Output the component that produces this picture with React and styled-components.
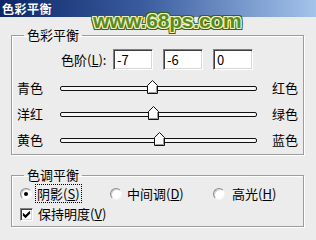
import styled, { createGlobalStyle } from "styled-components";

const GlobalStyle = createGlobalStyle`
  html, body {
    margin: 0;
    padding: 0;
    background: #ececec;
  }
  * {
    box-sizing: border-box;
  }
`;

const sliders = [
  { left: "青色", right: "红色", value: -7 },
  { left: "洋红", right: "绿色", value: -6 },
  { left: "黄色", right: "蓝色", value: 0 },
];

const TRACK_WIDTH = 197;

function Slider({ value }) {
  const x = ((value + 100) / 200) * TRACK_WIDTH - 5.5;
  return (
    <Track>
      <Thumb style={{ left: x }} width="11" height="14" viewBox="0 0 11 14">
        <polygon
          points="0.5,5.5 5.5,0.5 10.5,5.5 10.5,13.5 0.5,13.5"
          fill="#fbfbfb"
          stroke="#111"
        />
        <polyline points="9.5,6 9.5,12.5 1.5,12.5" fill="none" stroke="#9a9a9a" />
      </Thumb>
    </Track>
  );
}

function App() {
  return (
    <>
      <GlobalStyle />
      <Window>
        <TitleBar>色彩平衡</TitleBar>
        <Watermark>www.68ps.com</Watermark>
        <Content>
          <Group $height={127}>
            <Legend>色彩平衡</Legend>
            <LevelRow>
              <LevelLabel>
                色阶(<u>L</u>):
              </LevelLabel>
              <Field>-7</Field>
              <Field>-6</Field>
              <Field>0</Field>
            </LevelRow>
            <SliderList>
              {sliders.map((s) => (
                <SliderRow key={s.left}>
                  <span>{s.left}</span>
                  <Slider value={s.value} />
                  <RightLabel>{s.right}</RightLabel>
                </SliderRow>
              ))}
            </SliderList>
          </Group>

          <Group $height={59} $gap={13}>
            <Legend>色调平衡</Legend>
            <RadioRow>
              <Option $width={90}>
                <Radio $checked />
                <Focus>
                  阴影(<u>S</u>)
                </Focus>
              </Option>
              <Option $width={103}>
                <Radio />
                <span>
                  中间调(<u>D</u>)
                </span>
              </Option>
              <Option $gap={7}>
                <Radio />
                <span>
                  高光(<u>H</u>)
                </span>
              </Option>
            </RadioRow>
            <CheckRow>
              <CheckBox>
                <svg width="9" height="9" viewBox="0 0 9 9">
                  <path d="M1 3.5 L3.5 6 L8 1.5 M1 4.8 L3.5 7.3 L8 2.8" fill="none" stroke="#000" strokeWidth="1.2" />
                </svg>
              </CheckBox>
              <span>
                保持明度(<u>V</u>)
              </span>
            </CheckRow>
          </Group>
        </Content>
      </Window>
    </>
  );
}

const Window = styled.div`
  position: relative;
  width: 316px;
  height: 240px;
  overflow: hidden;
  background: #ececec;
  font-family: "Noto Sans CJK SC", "Liberation Sans", sans-serif;
  font-size: 13px;
  color: #000;
`;

const TitleBar = styled.div`
  height: 17px;
  padding-left: 2px;
  display: flex;
  align-items: center;
  background: linear-gradient(to right, #0c2668 0%, #3a5c9e 45%, #a4c4ec 100%);
  color: #fff;
  font-weight: bold;
  font-size: 12px;
  letter-spacing: 0.5px;
  line-height: 17px;
`;

const Watermark = styled.div`
  position: absolute;
  left: 93px;
  top: 10px;
  font-family: "Liberation Sans", Arial, sans-serif;
  font-weight: bold;
  font-size: 21px;
  line-height: 21px;
  color: #5d8a1f;
  letter-spacing: -0.2px;
  text-shadow:
    1px 0 0 #eef3c4, -1px 0 0 #eef3c4, 0 1px 0 #eef3c4, 0 -1px 0 #eef3c4,
    1px 1px 0 #eef3c4, -1px -1px 0 #eef3c4, 1px -1px 0 #eef3c4, -1px 1px 0 #eef3c4,
    2px 0 0 #3f5e14, -2px 0 0 #3f5e14, 0 2px 0 #3f5e14, 0 -2px 0 #3f5e14,
    2px 2px 0 #3f5e14, -2px -2px 0 #3f5e14, 2px -2px 0 #3f5e14, -2px 2px 0 #3f5e14;
`;

const Content = styled.div`
  padding: 0 12px 0 11px;
  display: flex;
  flex-direction: column;
`;

const Group = styled.fieldset`
  margin: ${(p) => p.$gap ?? 11}px 0 0;
  padding: 0;
  height: ${(p) => p.$height}px;
  border: 1px solid #9c9c9c;
  box-shadow: 1px 1px 0 #fff, inset 1px 1px 0 #fff;
  min-width: 0;
`;

const Legend = styled.legend`
  margin-left: 12px;
  padding: 0 3px;
  line-height: 14px;
  font-size: 13px;
`;

const LevelRow = styled.div`
  display: flex;
  align-items: center;
  padding: 7px 0 0 49px;
  gap: 10px;
  line-height: 16px;
`;

const LevelLabel = styled.span`
  width: 44px;
  margin-right: -2px;
  white-space: nowrap;
`;

const Field = styled.div`
  width: 40px;
  height: 21px;
  padding: 1px 0 0 3px;
  background: #fff;
  border: 1px solid;
  border-color: #808080 #fff #fff #808080;
  box-shadow: inset 1px 1px 0 #404040, inset -1px -1px 0 #d8d8d8;
  line-height: 17px;
`;

const SliderList = styled.div`
  margin-top: 5px;
  display: flex;
  flex-direction: column;
`;

const SliderRow = styled.div`
  display: grid;
  grid-template-columns: 43px ${TRACK_WIDTH}px auto;
  align-items: center;
  height: 26px;
  padding-left: 5px;
  line-height: 16px;
`;

const Track = styled.div`
  position: relative;
  height: 5px;
  border: 1px solid #111;
  border-radius: 2px;
  background: #f6f6f6;
`;

const Thumb = styled.svg`
  position: absolute;
  top: -7px;
  display: block;
`;

const RightLabel = styled.span`
  padding-left: 15px;
`;

const RadioRow = styled.div`
  display: flex;
  align-items: center;
  padding: 3px 0 0 8px;
  height: 20px;
  line-height: 16px;
`;

const Option = styled.label`
  display: flex;
  align-items: center;
  gap: ${(p) => p.$gap ?? 5}px;
  width: ${(p) => (p.$width ? `${p.$width}px` : "auto")};
`;

const Radio = styled.span`
  position: relative;
  width: 12px;
  height: 12px;
  border-radius: 50%;
  border: 1px solid;
  border-color: #8c8c8c #f4f4f4 #f4f4f4 #8c8c8c;
  background: #fff;
  box-shadow: inset 1px 1px 0 #cfcfcf;

  &::after {
    content: "";
    display: ${(p) => (p.$checked ? "block" : "none")};
    position: absolute;
    left: 3px;
    top: 3px;
    width: 4px;
    height: 4px;
    border-radius: 50%;
    background: #000;
  }
`;

const Focus = styled.span`
  outline: 1px dotted #000;
  outline-offset: 1px;
  line-height: 15px;
`;

const CheckRow = styled.div`
  display: flex;
  align-items: center;
  gap: 5px;
  padding: 4px 0 0 8px;
  line-height: 16px;
`;

const CheckBox = styled.span`
  display: flex;
  align-items: center;
  justify-content: center;
  width: 13px;
  height: 13px;
  background: #fff;
  border: 1px solid;
  border-color: #808080 #fff #fff #808080;
  box-shadow: inset 1px 1px 0 #404040, inset -1px -1px 0 #d8d8d8;
`;

export default App;
